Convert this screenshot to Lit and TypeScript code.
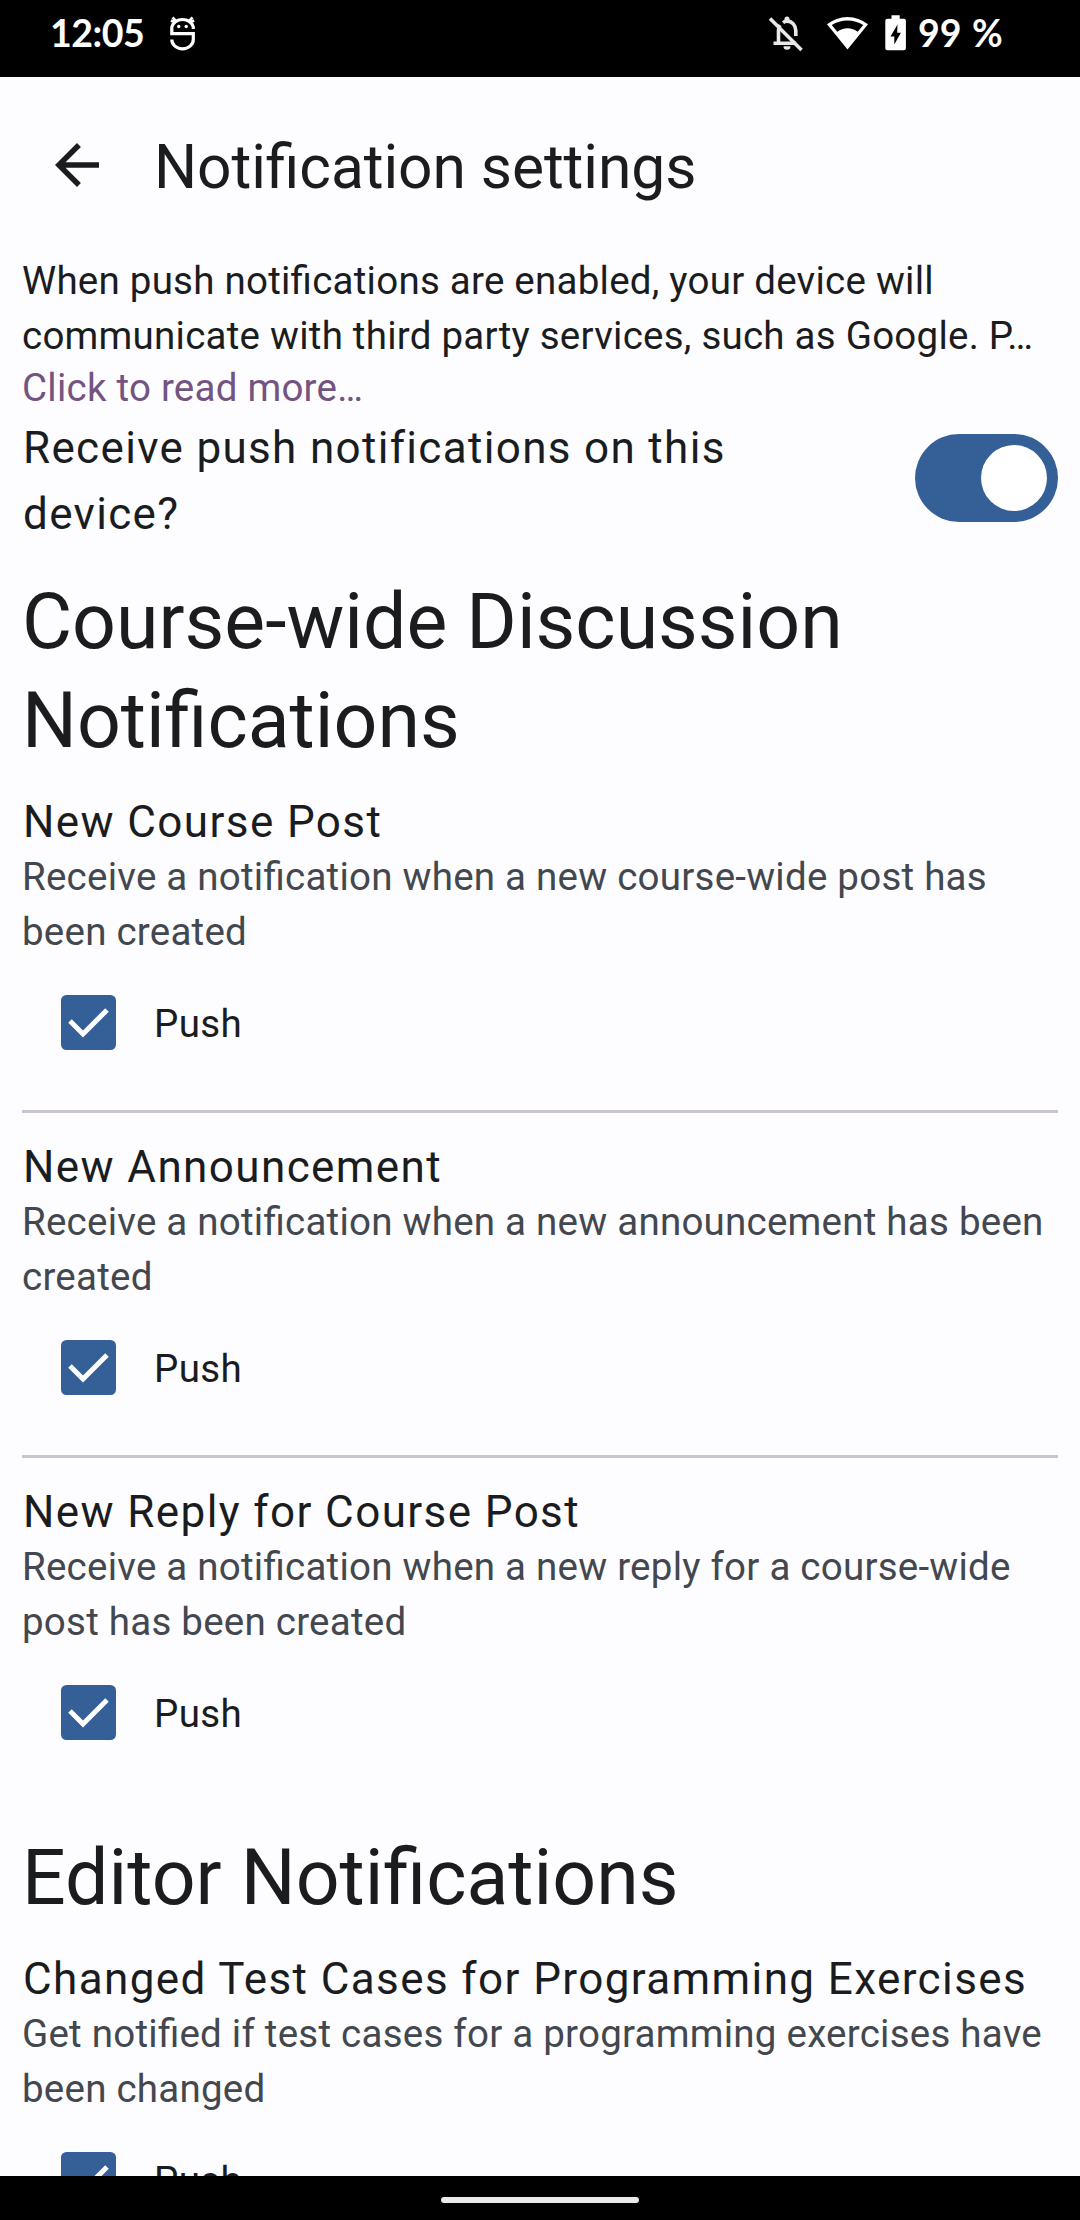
import { LitElement, html, css } from "lit";
import { customElement, property } from "lit/decorators.js";

@customElement("status-bar")
class StatusBar extends LitElement {
  static styles = css`
    :host { display: block; }
    .bar {
      height: 77px; box-sizing: border-box; background: #000; color: #fff;
      display: flex; justify-content: space-between;
      padding: 13px 77px 0 50px;
      font: 700 37.5px/40px Lato, sans-serif;
    }
    .group { display: flex; align-items: flex-start; }
    .clock { width: 116px; letter-spacing: -0.5px; }
    .icon { display: block; height: 40px; }
    .percent { width: 85px; margin-left: 10px; white-space: nowrap; word-spacing: 1.5px; }
  `;
  render() {
    return html`<div class="bar">
      <div class="group">
        <span class="clock">12:05</span>
        <svg class="icon" width="32" viewBox="166 13 32 40" fill="none" stroke="#fff" stroke-width="3.2">
          <path d="M193.300 29V27a10.900 9 0 0 0-21.500 0V33.600H193.300V39.500a10.700 9.300 0 0 1-21.500 0"/>
          <path stroke-width="2.600" d="M172.500 17.500l4 4M192.600 17.500l-4 4M170.800 20.800l3.600 1M194.200 20.800l-3.600 1"/>
          <circle cx="178.700" cy="26.500" r="1.700" fill="#fff" stroke="none"/>
          <circle cx="186.200" cy="26.500" r="1.700" fill="#fff" stroke="none"/>
        </svg>
      </div>
      <div class="group">
        <svg class="icon" width="142" viewBox="766 13 142 40" fill="#fff">
          <g fill="none" stroke="#e8e8e8" stroke-width="3.600">
            <path d="M773.500 43.300H796M778.500 42V30.500q0-3 1.500-5.500M783 22.600q2-1.500 4-1.500c5 0 8.800 4.300 8.800 9.500V36"/>
            <path d="M770 18.500L801.500 50"/>
          </g>
          <path fill="#e8e8e8" d="M784.500 20.500V19a2.500 2.500 0 0 1 5 0V21.500zM783.500 46.300h7a3.500 3.500 0 0 1-7 0z"/>
          <path fill-rule="evenodd" d="M827 24.300a32.500 32.500 0 0 1 41 0L847.500 49.500zM831.800 25L837.300 31.800a16.500 16.500 0 0 1 20.400 0L863.200 25a29 29 0 0 0-31.400 0z"/>
          <path fill-rule="evenodd" d="M891.500 15.300h8.200v3.500h4.200q2 0 2 2V48.300q0 2-2 2H887.300q-2 0-2-2V20.800q0-2 2-2h4.200zM897.500 24.500l-7 12h3.800V44.500l6.600-11.700h-3.700z"/>
        </svg>
        <span class="percent">99 %</span>
      </div>
    </div>`;
  }
}

@customElement("push-option")
class PushOption extends LitElement {
  @property() heading = "";
  @property() description = "";
  static styles = css`
    :host { display: block; }
    .title { font-size: 44px; line-height: 66px; letter-spacing: 1.4px; margin-bottom: -6px; padding-left: 1px; white-space: nowrap; }
    .desc { font-size: 38.5px; line-height: 55px; color: #43474e; letter-spacing: 0.24px; font-feature-settings: "liga" 1; }
    .row { display: flex; align-items: center; gap: 38px; height: 55px; margin-top: 36px; padding-left: 39px; }
    .box { width: 55px; height: 55px; border-radius: 5.500px; background: #355f97; }
    .tick { display: block; }
    .label { font-size: 38.5px; line-height: 55px; padding-top: 2px; letter-spacing: 0.4px; }
  `;
  render() {
    return html`
      <div class="title">${this.heading}</div>
      <div class="desc">${this.description}</div>
      <div class="row">
        <div class="box">
          <svg class="tick" width="55" height="55" viewBox="0 0 55 55">
            <path d="M9 26L22 39L46 15" fill="none" stroke="#fff" stroke-width="5"/>
          </svg>
        </div>
        <span class="label">Push</span>
      </div>`;
  }
}

@customElement("app-root")
class AppRoot extends LitElement {
  static styles = css`
    :host { display: block; }
    .screen {
      width: 1080px; height: 2220px; overflow: hidden; background: #fdfcff; color: #1a1c1e;
      font-family: Roboto, sans-serif; display: flex; flex-direction: column;
    }
    .appbar { flex: none; height: 176px; display: flex; align-items: center; gap: 44px; padding-left: 44px; }
    .title { font-size: 60.5px; line-height: 77px; padding-top: 4px; letter-spacing: -0.08px; font-feature-settings: "liga" 1; }
    .content { flex: 1; min-height: 0; overflow: hidden; padding: 0 22px; }
    .info { font-size: 38.5px; line-height: 55px; letter-spacing: 0.24px; font-feature-settings: "liga" 1; }
    .link { font-size: 38.5px; line-height: 50px; color: #735380; margin-bottom: -1px; letter-spacing: 0.24px; }
    .receive { display: flex; align-items: center; justify-content: space-between; height: 132px; }
    .question { width: 760px; font-size: 44px; line-height: 66px; letter-spacing: 1.33px; padding: 5px 0 0 1px; }
    .switch { box-sizing: border-box; width: 143px; height: 88px; border-radius: 44px; background: #355f97; padding: 11px; display: flex; justify-content: flex-end; }
    .thumb { width: 66px; height: 66px; border-radius: 50%; background: #fff; }
    .heading { font-size: 77px; line-height: 99px; margin: 29px 0 18px; }
    .divider { height: 3px; background: #c9c4d0; margin: 60px 0 21px; }
    .second { margin-top: 89px; }
    .nav { flex: none; height: 44px; background: #000; display: flex; justify-content: center; align-items: center; box-sizing: border-box; padding-top: 4px; }
    .pill { width: 198px; height: 6px; border-radius: 3px; background: #ebebeb; }
  `;
  private posts = [
    ["New Course Post", "Receive a notification when a new course-wide post has been created"],
    ["New Announcement", "Receive a notification when a new announcement has been created"],
    ["New Reply for Course Post", "Receive a notification when a new reply for a course-wide post has been created"],
  ];
  render() {
    return html`<div class="screen">
      <status-bar></status-bar>
      <div class="appbar">
        <svg width="66" height="66" viewBox="0 0 24 24" fill="#1a1c1e"><path d="M20 11H7.830l5.590-5.590L12 4l-8 8 8 8 1.410-1.410L7.830 13H20v-2z"/></svg>
        <span class="title">Notification settings</span>
      </div>
      <div class="content">
        <div class="info">When push notifications are enabled, your device will<br>communicate with third party services, such as Google. P…</div>
        <div class="link">Click to read more…</div>
        <div class="receive">
          <div class="question">Receive push notifications on this device?</div>
          <div class="switch"><div class="thumb"></div></div>
        </div>
        <div class="heading">Course-wide Discussion Notifications</div>
        ${this.posts.map(([t, d], i) => html`
          ${i ? html`<div class="divider"></div>` : ""}
          <push-option .heading=${t} .description=${d}></push-option>`)}
        <div class="heading second">Editor Notifications</div>
        <push-option .heading=${"Changed Test Cases for Programming Exercises"}
          .description=${"Get notified if test cases for a programming exercises have been changed"}></push-option>
      </div>
      <div class="nav"><div class="pill"></div></div>
    </div>`;
  }
}
